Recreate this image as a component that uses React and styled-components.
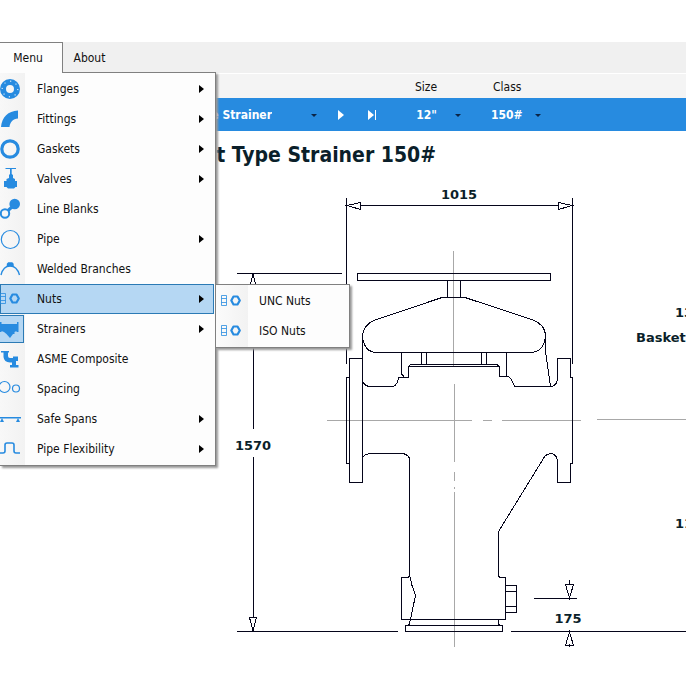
import React from 'react'
import styled, { createGlobalStyle } from 'styled-components'

const GlobalStyle = createGlobalStyle`
*{
  box-sizing:border-box;
}
body{
  margin:0;
  background:#fff;
  color:#111;
  font-family:"DejaVu Sans Condensed","DejaVu Sans",sans-serif;
  font-stretch:condensed;
  font-size:12px;
  overflow-x:hidden;
}
button,select{
  font:inherit;
  color:inherit;
  border:none;
  background:none;
  padding:0;
  margin:0;
}
ul{
  list-style:none;
  margin:0;
  padding:0;
}
`

const Page = styled.div`
padding-top:42px;
overflow:hidden;
`

const MenuBar = styled.nav`
position:relative;
z-index:2;
display:flex;
height:31px;
background:#f0f0f0;
`

const Tab = styled.button`
width:${(p) => (p.$open ? '63px' : '54px')};
height:31px;
padding-right:${(p) => (p.$open ? '6px' : '0')};
background:${(p) => (p.$open ? '#fdfdfd' : 'transparent')};
border-top:1px solid ${(p) => (p.$open ? '#808080' : 'transparent')};
border-right:1px solid ${(p) => (p.$open ? '#808080' : 'transparent')};
position:relative;
z-index:${(p) => (p.$open ? 2 : 0)};
`

const Panel = styled.ul`
position:absolute;
top:30px;
left:0;
width:216px;
padding:1px 1px 1px 0;
background:linear-gradient(90deg,#f8f8f8,#f2f2f2 25px,#fdfdfd 25px);
border:1px solid #808080;
border-left:none;
box-shadow:2px 2px 2px #999;
`

const SubPanel = styled.ul`
position:absolute;
top:0;
left:215px;
z-index:3;
width:135px;
padding:1px 2px;
background:linear-gradient(90deg,#fbfbfb,#f2f2f2 32px,#fdfdfd 32px);
border:1px solid #808080;
box-shadow:2px 2px 2px #999;
`

const Entry = styled.li`
position:relative;
`

const Row = styled.button`
display:grid;
grid-template-columns:${(p) => (p.$sub ? '41px 1fr' : '37px 1fr 15px')};
align-items:center;
width:100%;
height:30px;
text-align:left;
background:${(p) => (p.$active ? '#b5d7f3' : 'transparent')};
box-shadow:${(p) => (p.$active ? 'inset 0 0 0 1px #2b7ab5' : 'none')};
`

const IconBox = styled.span`
display:flex;
align-items:center;
justify-content:${(p) => (p.$sub ? 'flex-end' : 'center')};
width:24px;
height:28px;
padding-right:${(p) => (p.$sub ? '0' : '4px')};
background:${(p) => (p.$checked ? '#b5d7f3' : 'transparent')};
border:1px solid ${(p) => (p.$checked ? '#2b7ab5' : 'transparent')};
border-left:none;
svg{
  flex:none;
}
`

const Labels = styled.div`
display:flex;
height:25px;
background:#f4f4f4;
border-top:1px solid #fff;
line-height:26px;
padding-left:400px;
`

const FieldLabel = styled.label`
width:78px;
padding-left:15px;
`

const Toolbar = styled.div`
display:flex;
align-items:center;
height:33px;
background:#278be0;
color:#fff;
font-weight:bold;
`

const Field = styled.span`
display:flex;
align-items:center;
justify-content:space-between;
width:${(p) => p.$width};
margin-right:${(p) => p.$after || '0'};
`

const Picker = styled.select`
appearance:none;
width:${(p) => p.$width};
font-weight:bold;
text-align-last:${(p) => (p.$end ? 'right' : 'left')};
`

const Step = styled.button`
display:flex;
align-items:center;
justify-content:center;
width:31px;
height:33px;
`

const Title = styled.h1`
margin:0;
padding:9px 0 0 153px;
height:49px;
font-size:21px;
line-height:30px;
font-weight:bold;
color:#0b1f2a;
white-space:nowrap;
`

const Sheet = styled.svg`
display:block;
fill:none;
stroke:#05051a;
stroke-width:1;
shape-rendering:crispEdges;
text{
  font-family:"DejaVu Sans",sans-serif;
  font-stretch:normal;
  font-size:13px;
  font-weight:bold;
  fill:#0b1f2a;
  stroke:none;
}
`

const blue = '#278be0'

const art = {
  flange: (
    <>
      <circle cx="10" cy="10" r="7" fill="none" stroke={blue} strokeWidth="6" />
      <circle cx="10" cy="10" r="7.8" fill="none" stroke="#d8ebfa" strokeWidth="1.2" strokeDasharray="1.2 4.9" />
    </>
  ),
  elbow: <path d="M1 18C2 8 8 2 18 1.500V9.500C13 10 10 13 9.500 18Z" fill={blue} />,
  gasket: <circle cx="10" cy="10" r="8.2" fill="none" stroke={blue} strokeWidth="3.2" />,
  valve: (
    <path
      d="M5.500 -1H16V0H11.700V5L13 6V9L15 10V12H17V18H15.500L14 19.500H8L6.500 18H4V12H6.500V10L9 9V6L10 5V0H5.500Z"
      fill={blue}
    />
  ),
  blank: (
    <>
      <circle cx="14.7" cy="5" r="5.3" fill={blue} />
      <circle cx="5" cy="14.5" r="4.2" fill="none" stroke={blue} strokeWidth="2" />
      <path d="M8 11.500L12 8" stroke={blue} strokeWidth="3" />
    </>
  ),
  pipe: <circle cx="10.300" cy="10.500" r="9" fill="none" stroke={blue} strokeWidth="1.2" />,
  branch: (
    <g fill="none" stroke={blue} strokeWidth="1.4">
      <path d="M1 16C4 4 16 4 19.500 16" />
      <path d="M7.500 6.500V5L8.500 4H12L13 5V6.500Z" fill={blue} />
    </g>
  ),
  nuts: (
    <g fill="none" stroke={blue}>
      <path d="M.5 4.500H5.500V14.500H.5ZM.5 7.500H5.500M.5 11.500H5.500" strokeWidth="0.8" />
      <path d="M12.500 5.500H16.500L18.800 9.500L16.500 13.500H12.500L10.300 9.500Z" strokeWidth="2.2" strokeLinejoin="round" />
    </g>
  ),
  strainer: <path d="M0 3H1.500V5H17V3H18.500V13H16.500V12L14.500 13V15H13L10 19L6.500 15L4 13L1.500 12V13H0Z" fill={blue} />,
  composite: <path d="M1 2H9V3.500H8V7Q8 9 10 9H13V7.500H18V12H16V16H18.500V18.500H10V16H12V13.500H10Q4 13 3.500 8V3.500H1Z" fill={blue} />,
  spacing: (
    <g fill="none" stroke={blue} strokeWidth="1.2">
      <circle cx="4.500" cy="8" r="5.5" />
      <circle cx="16" cy="9.500" r="3.5" />
    </g>
  ),
  spans: (
    <g fill={blue}>
      <path d="M0 8H21V9.500H0Z" />
      <path d="M2 9L4 13H0ZM18 9L20 13H16Z" />
    </g>
  ),
  flex: <path d="M0 14H3Q5 14 5 12V6Q5 4 7 4H12Q14 4 14 6V12Q14 14 16 14H20" fill="none" stroke={blue} strokeWidth="1.6" />,
}

const items = [
  { label: 'Flanges', icon: 'flange', more: true },
  { label: 'Fittings', icon: 'elbow', more: true },
  { label: 'Gaskets', icon: 'gasket', more: true },
  { label: 'Valves', icon: 'valve', more: true },
  { label: 'Line Blanks', icon: 'blank' },
  { label: 'Pipe', icon: 'pipe', more: true },
  { label: 'Welded Branches', icon: 'branch' },
  { label: 'Nuts', icon: 'nuts', more: true, children: ['UNC Nuts', 'ISO Nuts'] },
  { label: 'Strainers', icon: 'strainer', more: true, checked: true },
  { label: 'ASME Composite', icon: 'composite' },
  { label: 'Spacing', icon: 'spacing' },
  { label: 'Safe Spans', icon: 'spans', more: true },
  { label: 'Pipe Flexibility', icon: 'flex', more: true },
]

function Glyph({ name }) {
  return (
    <svg width="20" height="20" viewBox="0 0 20 20" overflow="visible" aria-hidden="true">
      {art[name]}
    </svg>
  )
}

function Caret() {
  return (
    <svg width="6" height="4" viewBox="0 0 6 4" aria-hidden="true">
      <path d="M0 1H6L3 4Z" fill="#0b2547" />
    </svg>
  )
}

function MainMenu() {
  return (
    <Panel role="menu">
      {items.map((item) => (
        <Entry key={item.label} role="none">
          <Row role="menuitem" $active={!!item.children}>
            <IconBox $checked={item.checked}>
              <Glyph name={item.icon} />
            </IconBox>
            <span>{item.label}</span>
            {item.more && (
              <svg width="5" height="8" viewBox="0 0 5 8" aria-hidden="true">
                <path d="M0 0L5 4L0 8Z" fill="#000" />
              </svg>
            )}
          </Row>
          {item.children && (
            <SubPanel role="menu">
              {item.children.map((child) => (
                <Entry key={child} role="none">
                  <Row role="menuitem" $sub>
                    <IconBox $sub>
                      <Glyph name="nuts" />
                    </IconBox>
                    <span>{child}</span>
                  </Row>
                </Entry>
              ))}
            </SubPanel>
          )}
        </Entry>
      ))}
    </Panel>
  )
}

function StrainerDrawing() {
  return (
    <Sheet width="900" height="480" viewBox="0 180 900 480" role="img" aria-label="Basket type strainer dimensions">
      {/* centre lines */}
      <g stroke="#a8a8a8">
        <path d="M453.500 251V366M454.500 384V462M454.500 472V481M454.500 487V489M454.500 492V647" />
        <path d="M327 420.500H472M483 420.500H492M502 420.500H581M597 419.500H900" />
      </g>

      {/* overall length */}
      <path d="M346.500 198V364M572.500 198V364M346 205.500H573" />
      <path d="M347 205.500L360.500 202.500V209.500ZM572 205.500L558.500 202.500V209.500Z" fill="#fff" />
      <text x="459" y="199" textAnchor="middle">1015</text>

      {/* overall height */}
      <path d="M237 273.500H342M253.500 273V429M253.500 457V631M237 631.500H398M511 631.500H900" />
      <path d="M253 274L249.500 287.500H256.500ZM249.500 617.500H256.500L253 631Z" fill="#fff" />
      <text x="253" y="450" textAnchor="middle">1570</text>

      {/* drain height */}
      <path d="M534 598.500H577M569.500 580V585" />
      <path d="M565.500 584.500H573.500L569.500 598ZM569.500 632L565.500 645.500H573.500Z" fill="#fff" />
      <path d="M569.500 644V647" />
      <text x="568" y="623" textAnchor="middle">175</text>

      {/* handwheel and bonnet */}
      <path d="M357.500 273.500H550.500V280.500H357.500ZM447.500 280V297M460.500 280V297" />
      <path d="M442 297.500H465L533 320Q545.500 325 545.500 336Q544 352.500 530 352.500H377Q364 352.500 362.500 336Q363 325 375 320Z" />
      <path d="M401.500 352V374L404 376.500M421.500 352V364M426.500 352V364M481.500 352V364M486.500 352V364M506.500 352V376" />
      <path d="M408.500 366.500L410.500 364.500H497L499.500 366.500ZM545.500 336V352L550.500 386" />

      {/* flanges */}
      <path d="M362.500 336V358M349.500 358.500H362.500V482.500H349.500ZM349.500 377.500H346.500V463.500H349.500" />
      <path d="M557.500 380V358.500H570.500V377.500H572.500V463.500H570.500V482.500H557.500V460" />

      {/* body */}
      <path d="M408.500 366V377.500H398.500Q397.500 385 393 386.500H370Q364 386 362.500 381" />
      <path d="M499.500 366V376.500H508Q511 378 512 381L515 386.500H551Q556 386 557.500 380" />
      <path d="M362.500 458Q365 453.500 371 453.500H403Q409 455 409.500 459V576L408 577.500H401.500V619.500H505.500V577.500H500L498.500 576V531.500L545 456Q548 453 553 454Q557 456 557.500 461" />
      <path d="M410.500 577L411.500 584L415.500 595.500L410.500 619L409.500 624L408 625.500M498.500 619V624L500 625.500" />
      <path d="M405.500 625.500H502.500V631.500H405.500ZM505.500 585.500H516.500V612.500H505.500M505.500 591.500H516.500M505.500 606.500H516.500" />

      <text x="675" y="317">13</text>
      <text x="636" y="342">Basket</text>
      <text x="675" y="528">11</text>
    </Sheet>
  )
}

export default function App() {
  return (
    <Page>
      <GlobalStyle />
      <MenuBar>
        <Tab $open>Menu</Tab>
        <Tab>About</Tab>
        <MainMenu />
      </MenuBar>

      <Labels>
        <FieldLabel htmlFor="size">Size</FieldLabel>
        <FieldLabel htmlFor="class">Class</FieldLabel>
      </Labels>

      <Toolbar>
        <Field $width="317px" $after="8px">
          <Picker $width="272px" $end aria-label="Type">
            <option>Basket Type Strainer</option>
          </Picker>
          <Caret />
        </Field>
        <Step aria-label="Next">
          <svg width="6" height="10" viewBox="0 0 6 10">
            <path d="M0 0L6 5L0 10Z" fill="#fff" />
          </svg>
        </Step>
        <Step aria-label="Last">
          <svg width="8" height="10" viewBox="0 0 8 10">
            <path d="M0 0L6 5L0 10ZM7 0H8V10H7Z" fill="#fff" />
          </svg>
        </Step>
        <Field $width="74px" $after="30px">
          <Picker id="size" $width="50px" $end>
            <option>12"</option>
          </Picker>
          <Caret />
        </Field>
        <Field $width="50px">
          <Picker id="class" $width="40px">
            <option>150#</option>
          </Picker>
          <Caret />
        </Field>
      </Toolbar>

      <Title>Basket Type Strainer 150#</Title>
      <StrainerDrawing />
    </Page>
  )
}
